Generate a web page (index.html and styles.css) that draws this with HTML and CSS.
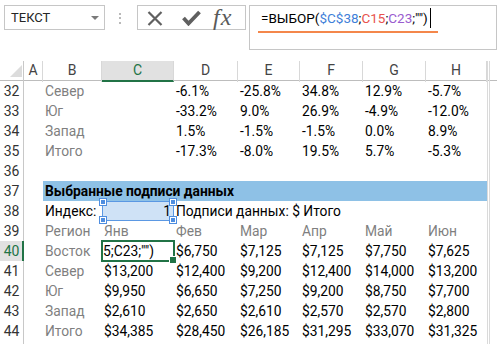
FILE: index.html
```html
<!DOCTYPE html>
<html lang="ru">
<head>
<meta charset="utf-8">
<link rel="stylesheet" href="styles.css">
</head>
<body>
<div class="toolbar">
  <div class="namebox"><span class="nb-text">ТЕКСТ</span><span class="nb-arrow"></span></div>
  <div class="grip"></div>
  <div class="btns">
    <svg class="ic-x" width="16" height="15" viewBox="0 0 16 15"><path d="M1.5 1 L14.5 14 M14.5 1 L1.5 14" stroke="#606060" stroke-width="2.2" fill="none"/></svg>
    <svg class="ic-ok" width="19" height="16" viewBox="0 0 19 16"><path d="M1.5 8 L6.5 13.5 L17.5 2" stroke="#606060" stroke-width="3.8" fill="none"/></svg>
    <span class="fx">fx</span>
  </div>
  <div class="formula">
    <div class="fline"><span class="ftext">=ВЫБОР(<span class="r1">$C$38</span>;<span class="r2">C15</span>;<span class="r3">C23</span>;"")</span><span class="caret"></span></div>
    <div class="uline"></div>
  </div>
</div>
<div class="sheet">
  <div class="row hdr">
    <div class="rh corner"><svg width="24" height="20" viewBox="0 0 24 20"><polygon points="22,4 22,16 10,16" fill="#dcdcdc"/></svg></div>
    <div class="ch">A</div><div class="ch">B</div><div class="ch sel">C</div><div class="ch">D</div><div class="ch">E</div><div class="ch">F</div><div class="ch">G</div><div class="ch">H</div><div class="ch edge"></div><div class="ch rest"></div>
  </div>
  <div class="row"><div class="rh">32</div><div class="c"></div><div class="c lbl">Север</div><div class="c"></div><div class="c">-6.1%</div><div class="c">-25.8%</div><div class="c">34.8%</div><div class="c">12.9%</div><div class="c">-5.7%</div><div class="c edge"></div><div class="c"></div></div>
  <div class="row"><div class="rh">33</div><div class="c"></div><div class="c lbl">Юг</div><div class="c"></div><div class="c">-33.2%</div><div class="c">9.0%</div><div class="c">26.9%</div><div class="c">-4.9%</div><div class="c">-12.0%</div><div class="c edge"></div><div class="c"></div></div>
  <div class="row"><div class="rh">34</div><div class="c"></div><div class="c lbl">Запад</div><div class="c"></div><div class="c">1.5%</div><div class="c">-1.5%</div><div class="c">-1.5%</div><div class="c">0.0%</div><div class="c">8.9%</div><div class="c edge"></div><div class="c"></div></div>
  <div class="row"><div class="rh">35</div><div class="c"></div><div class="c lbl">Итого</div><div class="c"></div><div class="c">-17.3%</div><div class="c">-8.0%</div><div class="c">19.5%</div><div class="c">5.7%</div><div class="c">-5.3%</div><div class="c edge"></div><div class="c"></div></div>
  <div class="row"><div class="rh">36</div><div class="c"></div><div class="c"></div><div class="c"></div><div class="c"></div><div class="c"></div><div class="c"></div><div class="c"></div><div class="c"></div><div class="c edge"></div><div class="c"></div></div>
  <div class="row"><div class="rh">37</div><div class="c"></div><div class="c band">Выбранные подписи данных</div><div class="c edge"></div><div class="c"></div></div>
  <div class="row"><div class="rh">38</div><div class="c"></div><div class="c">Индекс:</div><div class="c idx"><span class="h h1"></span><span class="h h2"></span><span class="h h3"></span><span class="h h4"></span>1</div><div class="c span5">Подписи данных: $ Итого</div><div class="c edge"></div><div class="c"></div></div>
  <div class="row"><div class="rh">39</div><div class="c"></div><div class="c lbl">Регион</div><div class="c lbl">Янв</div><div class="c lbl">Фев</div><div class="c lbl">Мар</div><div class="c lbl">Апр</div><div class="c lbl">Май</div><div class="c lbl">Июн</div><div class="c edge"></div><div class="c"></div></div>
  <div class="row"><div class="rh act">40</div><div class="c"></div><div class="c lbl">Восток</div><div class="c edit"><div class="eclip"><span class="etext">=ВЫБОР($C$38;C15;C23;"")</span></div><span class="abox"></span></div><div class="c">$6,750</div><div class="c">$7,125</div><div class="c">$7,125</div><div class="c">$7,750</div><div class="c">$7,625</div><div class="c edge"></div><div class="c"></div></div>
  <div class="row"><div class="rh">41</div><div class="c"></div><div class="c lbl">Север</div><div class="c">$13,200</div><div class="c">$12,400</div><div class="c">$9,200</div><div class="c">$12,400</div><div class="c">$14,000</div><div class="c">$13,200</div><div class="c edge"></div><div class="c"></div></div>
  <div class="row"><div class="rh">42</div><div class="c"></div><div class="c lbl">Юг</div><div class="c">$9,950</div><div class="c">$6,650</div><div class="c">$7,250</div><div class="c">$9,200</div><div class="c">$8,750</div><div class="c">$7,700</div><div class="c edge"></div><div class="c"></div></div>
  <div class="row"><div class="rh">43</div><div class="c"></div><div class="c lbl">Запад</div><div class="c">$2,610</div><div class="c">$2,650</div><div class="c">$2,610</div><div class="c">$2,570</div><div class="c">$2,570</div><div class="c">$2,800</div><div class="c edge"></div><div class="c"></div></div>
  <div class="row"><div class="rh">44</div><div class="c"></div><div class="c lbl">Итого</div><div class="c">$34,385</div><div class="c">$28,450</div><div class="c">$26,185</div><div class="c">$31,295</div><div class="c">$33,070</div><div class="c">$31,325</div><div class="c edge"></div><div class="c"></div></div>
  <div class="row"><div class="rh"></div><div class="c"></div><div class="c"></div><div class="c"></div><div class="c"></div><div class="c"></div><div class="c"></div><div class="c"></div><div class="c"></div><div class="c edge"></div><div class="c"></div></div>
</div>
</body>
</html>
```
FILE: styles.css
```css
* { box-sizing: border-box; margin: 0; padding: 0; }
html, body { background: #fff; }
body {
  margin: 0;
  width: 497px;
  height: 344px;
  overflow: hidden;
  font-family: Roboto, "Liberation Sans", sans-serif;
  font-size: 14px;
  color: #000;
}

/* ---------- formula bar ---------- */
.toolbar {
  height: 61px;
  display: flex;
  align-items: flex-start;
  padding-top: 5px;
}
.namebox {
  margin-left: 4px;
  width: 101px;
  height: 25px;
  border: 1px solid #c6c6c6;
  display: flex;
  align-items: center;
  justify-content: space-between;
  padding: 0 5px 0 6px;
}
.nb-text { font-size: 13px; color: #262626; }
.nb-arrow {
  width: 0; height: 0;
  border-left: 4px solid transparent;
  border-right: 4px solid transparent;
  border-top: 4px solid #7a7a7a;
}
.grip {
  width: 2px;
  height: 11px;
  margin: 8px 16px 0 14px;
  background: repeating-linear-gradient(to bottom, #b9b9b9 0 2px, transparent 2px 4.5px);
}
.btns {
  width: 109px;
  height: 25px;
  border: 1px solid #c6c6c6;
  display: flex;
  align-items: center;
  padding-left: 9px;
}
.ic-x { margin-top: 1px; }
.ic-ok { margin-left: 19px; margin-top: 1px; }
.fx {
  margin-left: 12px;
  font-family: "Liberation Serif", serif;
  font-style: italic;
  font-size: 24px;
  letter-spacing: 1px;
  color: #5a5a5a;
  line-height: 20px;
  margin-top: -2px;
}
.formula {
  margin-left: 3px;
  width: 248px;
  height: 45px;
  border: 1px solid #c6c6c6;
  padding: 2px 0 0 11px;
}
.fline {
  display: flex;
  align-items: center;
  height: 20px;
  line-height: 20px;
  font-size: 13.5px;
}
.r1 { color: #3f7fd9; }
.r2 { color: #e8534d; }
.r3 { color: #9a5ccf; }
.caret {
  width: 1px;
  height: 20px;
  background: #000;
  margin-left: 2px;
}
.uline {
  margin: 3px 0 0 -3px;
  width: 180px;
  height: 2px;
  background: #f4874b;
}

/* ---------- sheet ---------- */
.sheet { display: flex; flex-direction: column; }
.row {
  display: grid;
  grid-template-columns: 24px 19px 59px 72px 64px 62px 63px 63px 61px 3px 1fr;
  height: 20px;
  line-height: 20px;
}
.rh {
  border-right: 1px solid #c8c8c8;
  text-align: center;
  color: #333;
  font-size: 14px;
}
.rh.act {
  background: #e1e1e1;
  color: #217346;
  border-right: 2px solid #217346;
  padding-left: 1px;
}
.corner { line-height: 0; }
.hdr { border-bottom: 1px solid #bdbdbd; height: 20px; line-height: 19px; }
.ch {
  border-right: 1px solid #d8d8d8;
  text-align: center;
  color: #444;
  font-size: 14px;
}
.ch.sel {
  background: #e1e1e1;
  color: #217346;
  border-bottom: 2px solid #217346;
}
.ch.rest { border-right: none; }
.c {
  padding-left: 2px;
  white-space: nowrap;
  position: relative;
  font-size: 13.8px;
}
.edge { border-left: 1px solid #dadada; border-right: 1px solid #dadada; padding: 0; }
.lbl { color: #7f7f7f; }
.band {
  grid-column: 3 / 10;
  background: #8ec1e6;
  font-weight: bold;
  padding-left: 2px;
}
.span5 { grid-column: 5 / 10; }
.idx {
  background: #cfe2f6;
  border: 1px solid #5b98e3;
  text-align: right;
  padding-right: 2px;
  line-height: 18px;
}
.h {
  position: absolute;
  width: 6px;
  height: 6px;
  background: #4f8ee0;
  border: 1px solid #fff;
  outline: 1px solid #4f8ee0;
}
.h1 { left: -3px; top: -3px; }
.h2 { right: -3px; top: -3px; }
.h3 { left: -3px; bottom: -3px; }
.h4 { right: -3px; bottom: -3px; }
.edit { padding: 0; }
.eclip {
  width: 52px;
  overflow: hidden;
  display: flex;
  justify-content: flex-end;
}
.etext { flex-shrink: 0; }
.abox {
  position: absolute;
  left: -1px;
  top: -1px;
  right: -1px;
  bottom: -1px;
  border: 2px solid #217346;
}
.abox::after {
  content: "";
  position: absolute;
  right: -4px;
  bottom: -4px;
  width: 6px;
  height: 6px;
  background: #217346;
  border: 1px solid #fff;
}
```
